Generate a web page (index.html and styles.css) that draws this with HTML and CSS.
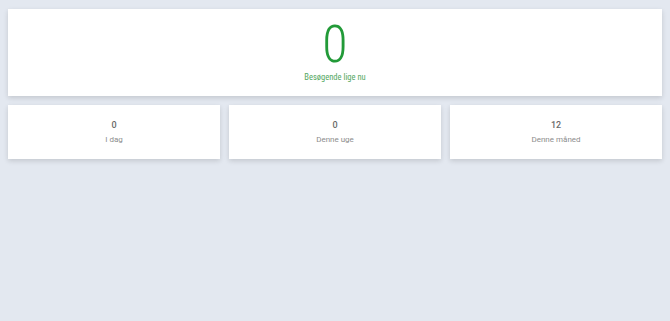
FILE: index.html
```html
<!doctype html>
<html lang="da">
<head>
    <meta charset="UTF-8">
    <meta name="viewport" content="width=device-width, initial-scale=1.0">
    <title>Besøgende</title>
    <link rel="stylesheet" href="styles.css">
</head>
<body>
<div class="live-card">
    <div class="live-count">0</div>
    <div class="live-label">Besøgende lige nu</div>
</div>

<div class="stats">
    <div class="stat-card">
        <div class="stat-value">0</div>
        <div class="stat-label">I dag</div>
    </div>
    <div class="stat-card">
        <div class="stat-value">0</div>
        <div class="stat-label">Denne uge</div>
    </div>
    <div class="stat-card">
        <div class="stat-value">12</div>
        <div class="stat-label">Denne måned</div>
    </div>
</div>
</body>
</html>
```

FILE: styles.css
```css
body {
    font-family: Roboto, 'Liberation Sans', sans-serif;
    margin: 0;
    padding: 9px 8px;
    background: #e3e8f0;
    min-height: 100vh;
    box-sizing: border-box;
}
.live-card {
    background: #ffffff;
    height: 87px;
    box-sizing: border-box;
    padding-top: 10px;
    text-align: center;
    font-stretch: condensed;
    box-shadow: 0 2px 5px rgba(0, 0, 0, 0.14);
}
.live-count {
    font-size: 52px;
    line-height: 52px;
    font-weight: 300;
    color: #229a38;
}
.live-label {
    margin-top: 1px;
    font-size: 8.5px;
    line-height: 10px;
    color: #55a862;
}
.stats {
    display: grid;
    grid-template-columns: repeat(3, 1fr);
    gap: 9px;
    margin-top: 9px;
}
.stat-card {
    background: #ffffff;
    height: 54px;
    box-sizing: border-box;
    padding-top: 15px;
    text-align: center;
    box-shadow: 0 2px 5px rgba(0, 0, 0, 0.14);
}
.stat-value {
    font-size: 9px;
    line-height: 10px;
    font-weight: 500;
    color: #6a6a6a;
}
.stat-label {
    margin-top: 5px;
    font-size: 8px;
    line-height: 10px;
    color: #8c8c8c;
}
```
